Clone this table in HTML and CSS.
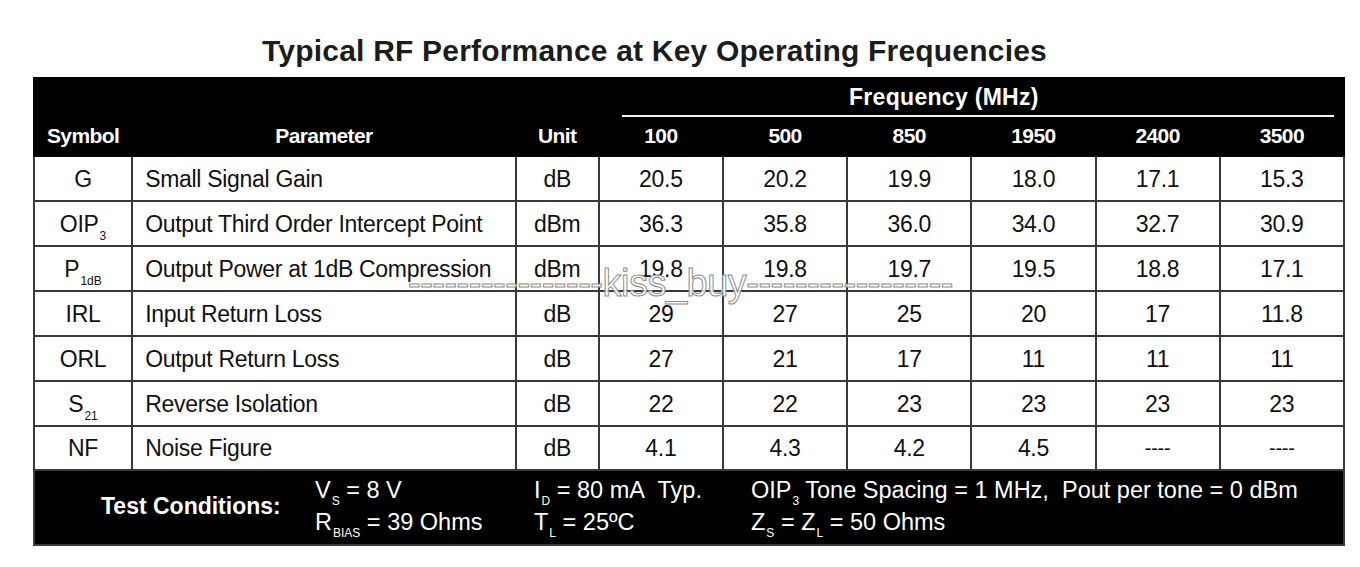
FILE: index.html
```html
<!DOCTYPE html>
<html lang="en">
<head>
<meta charset="utf-8">
<title>Typical RF Performance</title>
<link rel="stylesheet" href="styles.css">
</head>
<body>
<div class="page">
  <h1 class="title">Typical RF Performance at Key Operating Frequencies</h1>
  <table class="rf">
    <colgroup>
      <col class="c-sym"><col class="c-par"><col class="c-unit">
      <col class="c-f"><col class="c-f"><col class="c-f"><col class="c-f"><col class="c-f"><col class="c-f">
    </colgroup>
    <thead>
      <tr class="hdr-top">
        <th></th><th></th><th></th>
        <th colspan="6" class="freq"><div class="freq-label">Frequency (MHz)</div></th>
      </tr>
      <tr class="hdr">
        <th>Symbol</th><th>Parameter</th><th>Unit</th>
        <th>100</th><th>500</th><th>850</th><th>1950</th><th>2400</th><th>3500</th>
      </tr>
    </thead>
    <tbody>
      <tr><td class="sym">G</td><td class="par">Small Signal Gain</td><td>dB</td><td>20.5</td><td>20.2</td><td>19.9</td><td>18.0</td><td>17.1</td><td>15.3</td></tr>
      <tr><td class="sym">OIP<span class="sub">3</span></td><td class="par">Output Third Order Intercept Point</td><td>dBm</td><td>36.3</td><td>35.8</td><td>36.0</td><td>34.0</td><td>32.7</td><td>30.9</td></tr>
      <tr><td class="sym">P<span class="sub">1dB</span></td><td class="par">Output Power at 1dB Compression</td><td>dBm</td><td>19.8</td><td>19.8</td><td>19.7</td><td>19.5</td><td>18.8</td><td>17.1</td></tr>
      <tr><td class="sym">IRL</td><td class="par">Input Return Loss</td><td>dB</td><td>29</td><td>27</td><td>25</td><td>20</td><td>17</td><td>11.8</td></tr>
      <tr><td class="sym">ORL</td><td class="par">Output Return Loss</td><td>dB</td><td>27</td><td>21</td><td>17</td><td>11</td><td>11</td><td>11</td></tr>
      <tr><td class="sym">S<span class="sub">21</span></td><td class="par">Reverse Isolation</td><td>dB</td><td>22</td><td>22</td><td>23</td><td>23</td><td>23</td><td>23</td></tr>
      <tr class="last"><td class="sym">NF</td><td class="par">Noise Figure</td><td>dB</td><td>4.1</td><td>4.3</td><td>4.2</td><td>4.5</td><td class="dash">----</td><td class="dash">----</td></tr>
    </tbody>
    <tfoot>
      <tr>
        <td colspan="9" class="cond">
          <div class="cond-grid">
            <div class="cond-title">Test Conditions:</div>
            <div>V<span class="csub">S</span> = 8 V</div>
            <div>I<span class="csub">D</span> = 80 mA&nbsp; Typ.</div>
            <div>OIP<span class="csub">3</span> Tone Spacing = 1 MHz,&nbsp; Pout per tone = 0 dBm</div>
            <div>R<span class="csub">BIAS</span> = 39 Ohms</div>
            <div>T<span class="csub">L</span> = 25ºC</div>
            <div>Z<span class="csub">S</span> = Z<span class="csub">L</span> = 50 Ohms</div>
          </div>
        </td>
      </tr>
    </tfoot>
  </table>
  <div class="watermark">----------------kiss_buy-----------------</div>
</div>
</body>
</html>
```
FILE: styles.css
```css
html, body {
  margin: 0;
  padding: 0;
  background: #fff;
}
body {
  font-family: "Liberation Sans", Arial, Helvetica, sans-serif;
  color: #111;
}
.page {
  position: relative;
  width: 1360px;
  height: 567px;
  overflow: hidden;
}
.title {
  margin: 0;
  padding-top: 33px;
  width: 1309px;
  text-align: center;
  font-size: 30px;
  line-height: 36px;
  font-weight: bold;
  color: #1c1c1c;
  letter-spacing: 0.2px;
}
.rf {
  margin: 8px 0 0 33px;
  border-collapse: collapse;
  table-layout: fixed;
  width: 1312px;
  font-size: 23px;
  letter-spacing: -0.3px;
}
.c-sym { width: 98px; }
.c-par { width: 383px; }
.c-unit { width: 83px; }
.c-f { width: 124px; }

.rf th {
  background: #000;
  color: #fff;
  border: 2px solid #000;
  padding: 0;
  font-weight: bold;
  text-align: center;
}
.hdr-top th { height: 36px; vertical-align: bottom; }
.hdr th {
  height: 33px;
  padding-bottom: 3px;
  font-size: 21px;
  letter-spacing: -0.6px;
  line-height: 24px;
}
.freq-label {
  margin: 0 9px 0 22px;
  border-bottom: 2px solid #f2f2f2;
  height: 36px;
  line-height: 36px;
  padding-right: 68px;
  font-size: 23px;
  letter-spacing: 0.3px;
}
.rf td {
  border: 2px solid #3a3a3a;
  padding: 0;
  height: 43px;
  text-align: center;
  vertical-align: middle;
  line-height: 26px;
}
.rf tbody tr.last td { height: 42px; }
.rf td.par {
  text-align: left;
  padding-left: 12px;
}
.sub {
  font-size: 12px;
  vertical-align: -8px;
  line-height: 0;
  letter-spacing: 0;
  margin-left: 1px;
}
.dash {
  font-size: 20px;
}
.rf td.cond {
  background: #000;
  color: #fff;
  border: 2px solid #3a3a3a;
  height: 75px;
  padding: 3px 0 0 0;
  box-sizing: border-box;
  vertical-align: top;
  text-align: left;
}
.cond-grid {
  display: grid;
  grid-template-columns: 214px 219px 217px auto;
  grid-template-rows: 32px 32px;
  align-items: center;
  padding-left: 66px;
  font-size: 23.5px;
  letter-spacing: 0;
}
.cond-title {
  grid-row: 1 / span 2;
  font-weight: bold;
  font-size: 23px;
  letter-spacing: 0;
}
.csub {
  font-size: 12px;
  vertical-align: -7px;
  line-height: 0;
  margin-left: 1px;
}
.watermark {
  position: absolute;
  left: 408px;
  top: 264px;
  font-size: 38px;
  line-height: 38px;
  letter-spacing: -0.5px;
  white-space: nowrap;
  color: rgba(255, 255, 255, 0.85);
  -webkit-text-stroke: 1px #8c8c8c;
  pointer-events: none;
}
```
